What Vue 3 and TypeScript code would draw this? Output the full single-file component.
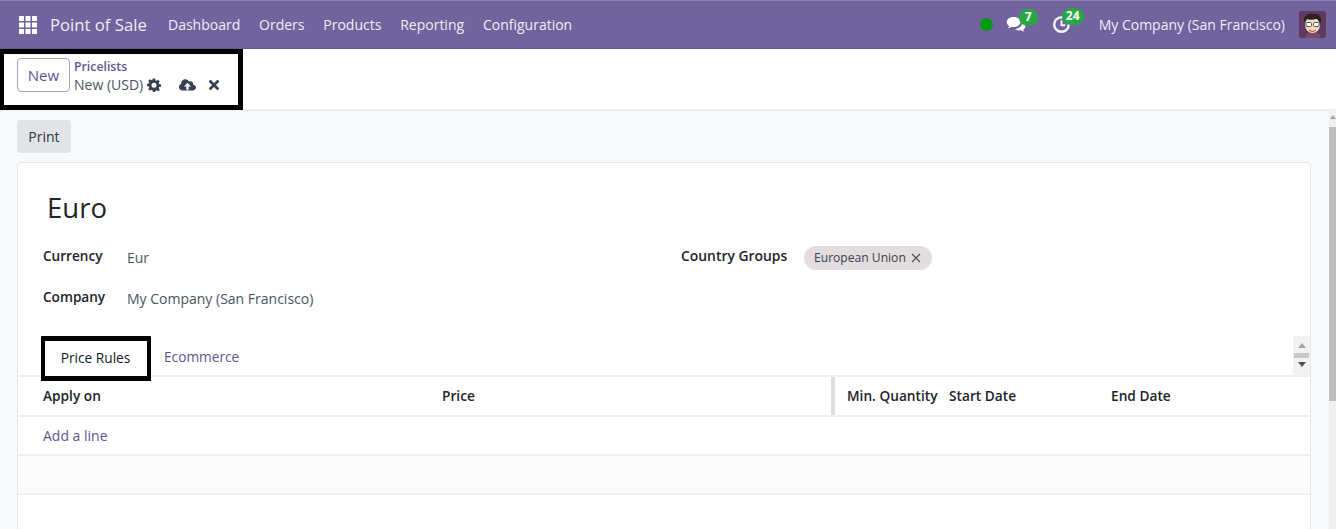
<script setup lang="ts">
const menus: string[] = ['Dashboard', 'Orders', 'Products', 'Reporting', 'Configuration']
const cols = [
  { label: 'Price', cls: 'c-price' },
  { label: 'Min. Quantity', cls: 'c-qty' },
  { label: 'Start Date', cls: 'c-start' },
  { label: 'End Date', cls: 'c-end' },
]
</script>

<template>
  <div class="page">
    <header class="nav">
      <svg class="apps" viewBox="0 0 18 18" width="18" height="18">
        <g fill="#fff">
          <rect x="0" y="0" width="5" height="5" /><rect x="6.5" y="0" width="5" height="5" /><rect x="13" y="0" width="5" height="5" />
          <rect x="0" y="6.5" width="5" height="5" /><rect x="6.5" y="6.5" width="5" height="5" /><rect x="13" y="6.5" width="5" height="5" />
          <rect x="0" y="13" width="5" height="5" /><rect x="6.5" y="13" width="5" height="5" /><rect x="13" y="13" width="5" height="5" />
        </g>
      </svg>
      <span class="brand">Point of Sale</span>
      <nav class="menu">
        <span v-for="m in menus" :key="m">{{ m }}</span>
      </nav>
      <div class="systray">
        <span class="dot"></span>
        <span class="tray-icon chat">
          <svg viewBox="0 0 22 18" width="21" height="17">
            <path fill="#fff" d="M8 1C3.9 1 .7 3.4.7 6.4c0 1.7 1 3.2 2.600 4.200-.2.9-.8 1.700-1.500 2.400 1.500-.2 2.900-.8 4-1.600.7.1 1.400.2 2.200.2 4.100 0 7.300-2.300 7.300-5.200S12.100 1 8 1z" />
            <path fill="#fff" d="M17 7.500c0 3.400-3.300 6-7.500 6.200 1.100 1 2.800 1.600 4.700 1.600.5 0 1-.1 1.500-.1.900.7 2.200 1.200 3.500 1.400-.6-.6-1-1.300-1.200-2 1.400-.8 2.300-2.100 2.300-3.500 0-1.500-1.100-2.900-2.800-3.600z" />
          </svg>
          <b class="badge b7">7</b>
        </span>
        <span class="tray-icon clock">
          <svg viewBox="0 0 20 20" width="19" height="19">
            <circle cx="10" cy="10" r="7.700" fill="none" stroke="#f3f0f8" stroke-width="2.600" />
            <path d="M10 5.500V10.800H14" fill="none" stroke="#f3f0f8" stroke-width="2" />
          </svg>
          <b class="badge b24">24</b>
        </span>
        <span class="company">My Company (San Francisco)</span>
        <svg class="avatar" viewBox="0 0 27 27" width="27" height="27">
          <rect width="27" height="27" rx="3" fill="#5d3b5e" />
          <path d="M6 27c.5-4 3-6 7.500-6s7.500 2 8 6z" fill="#7b4a68" />
          <ellipse cx="13.500" cy="14" rx="7.500" ry="8" fill="#f6d9bf" />
          <path d="M5 11C4 5 9 2 14 3c2-1 7 0 7 3 2 2 1 5 0 7-1-3-2-5-4-5-3 1-7 1-9 0-1 1-2 3-3 3z" fill="#2b2126" />
          <rect x="7" y="11.500" width="5.500" height="4" rx="1" fill="#fff" stroke="#444" stroke-width=".9" />
          <rect x="14.500" y="11.500" width="5.500" height="4" rx="1" fill="#fff" stroke="#444" stroke-width=".9" />
          <path d="M10 19c2 1.500 5 1.500 7 0" fill="none" stroke="#a5615a" stroke-width="1.100" />
        </svg>
      </div>
    </header>

    <section class="control">
      <div class="highlight">
        <button class="btn-new">New</button>
        <div class="crumbs">
          <a class="crumb-link">Pricelists</a>
          <div class="crumb-row">
            <span class="crumb-cur">New (USD)</span>
            <svg class="gear" viewBox="0 0 24 24" width="14" height="14">
              <path fill="#374151" fill-rule="evenodd" d="M10 1h4l.6 3.200 1.700.7L19 3.100 21.900 6l-1.800 2.700.7 1.700L24 11v4l-3.200.6-.7 1.700 1.800 2.700-2.900 2.900-2.700-1.800-1.700.7L14 24h-4l-.6-3.200-1.700-.7L5 21.900 2.100 19l1.800-2.700-.7-1.700L0 14v-4l3.200-.6.7-1.700L2.100 5 5 2.100l2.700 1.800 1.700-.7zM12 8.200a4.300 4.300 0 1 0 0 8.600 4.300 4.300 0 0 0 0-8.600z" />
            </svg>
            <svg class="cloud" viewBox="0 0 24 18" width="17" height="13">
              <path fill="#374151" fill-rule="evenodd" d="M19.800 7.800C19.900 7.400 20 7 20 6.500 20 4.600 18.400 3 16.500 3c-.7 0-1.400.2-2 .6C13.400 1.500 11.300 0 9 0 5.700 0 3 2.700 3 6v.5C1.200 7.200 0 9 0 11c0 2.800 2.200 5 5 5h14c2.800 0 5-2.200 5-4.500 0-1.700-1.800-3.300-4.200-3.700zM12 5l5 5.500h-3.300V15h-3.400v-4.500H7z" />
            </svg>
            <svg class="close" viewBox="0 0 12 12" width="10" height="10">
              <path d="M1.800 1.800l8.400 8.400M10.200 1.800l-8.400 8.400" stroke="#374151" stroke-width="3.200" stroke-linecap="square" />
            </svg>
          </div>
        </div>
      </div>
    </section>

    <main class="content">
      <button class="btn-print">Print</button>
      <div class="sheet">
        <h1 class="title">Euro</h1>
        <div class="fields">
          <div class="col-left">
            <div class="field f1"><label>Currency</label><span>Eur</span></div>
            <div class="field f2"><label>Company</label><span>My Company (San Francisco)</span></div>
          </div>
          <div class="col-right">
            <label>Country Groups</label>
            <span class="tag">European Union
              <svg viewBox="0 0 10 10" width="10" height="10"><path d="M1 1l8 8M9 1l-8 8" stroke="#4b5563" stroke-width="1.300" /></svg>
            </span>
          </div>
        </div>
        <div class="tabs">
          <span class="tab active">Price Rules</span>
          <span class="tab">Ecommerce</span>
          <div class="spin">
            <i class="up"></i><i class="bar"></i><i class="down"></i>
          </div>
        </div>
        <div class="thead">
          <span class="c-apply">Apply on</span>
          <span v-for="c in cols" :key="c.label" :class="c.cls">{{ c.label }}</span>
        </div>
        <div class="row add">Add a line</div>
        <div class="row shade"></div>
      </div>
    </main>

    <aside class="scrollbar">
      <i class="arrow"></i>
      <div class="thumb"></div>
    </aside>
  </div>
</template>

<style scoped>
.page {
  position: relative;
  height: 529px;
  overflow: hidden;
  font-family: "Open Sans", "Noto Sans", sans-serif;
  font-size: 14px;
  color: #374151;
  background: #fff;
}
.nav {
  height: 49px;
  box-sizing: border-box;
  display: flex;
  align-items: center;
  background: #71639e;
  border-top: 1px solid #8d80b3;
  border-bottom: 1px solid #65598f;
  padding: 0 10px 0 19px;
  color: #f0edf5;
}
.brand { margin-left: 13px; font-size: 16.7px; width: 118px; white-space: nowrap; }
.menu { display: flex; gap: 18.8px; font-size: 14px; }
.systray { margin-left: auto; display: flex; align-items: center; }
.dot { width: 13px; height: 13px; border-radius: 50%; background: #019a15; }
.tray-icon { position: relative; display: flex; }
.chat { margin-left: 13px; }
.clock { margin-left: 25px; }
.badge {
  position: absolute;
  top: -7px;
  height: 17px;
  border-radius: 9px;
  background: #28a745;
  color: #fff;
  font-size: 12px;
  line-height: 16px;
  font-weight: 700;
  text-align: center;
}
.b7 { left: 13px; width: 19px; }
.b24 { left: 10px; width: 22px; }
.company { margin-left: 28px; white-space: nowrap; }
.avatar { margin-left: 14px; }

.control {
  height: 62px;
  box-sizing: border-box;
  border-bottom: 2px solid #eceef1;
  background: #fff;
}
.highlight {
  width: 243px;
  height: 61px;
  box-sizing: border-box;
  border: 5px solid #000;
  border-left-width: 4px;
  display: flex;
  align-items: flex-start;
  padding: 4px 0 0 13px;
  background: #fff;
}
.btn-new {
  width: 53px;
  height: 34px;
  box-sizing: border-box;
  border: 1px solid #a79fc4;
  border-radius: 4px;
  background: #fff;
  color: #5f5590;
  font: 500 15px "Open Sans", sans-serif;
  padding: 0;
}
.crumbs { margin-left: 4px; display: flex; flex-direction: column; }
.crumb-link { font-size: 12.300px; font-weight: 600; color: #5f5590; line-height: 17px; }
.crumb-row { display: flex; align-items: center; line-height: 20px; height: 20px; white-space: nowrap; color: #4b5563; }
.gear { margin-left: 4px; }
.cloud { margin-left: 18px; }
.close { margin-left: 13px; }

.content {
  background: #f8f9fa;
  height: 418px;
  box-sizing: border-box;
  padding: 9px 25px 0 17px;
}
.btn-print {
  display: block;
  width: 54px;
  height: 33px;
  border: 0;
  border-radius: 3px;
  background: #e2e4e8;
  color: #2f3640;
  font: 500 14px "Open Sans", sans-serif;
  padding: 0;
}
.sheet {
  margin-top: 9px;
  width: 1294px;
  height: 380px;
  box-sizing: border-box;
  background: #fff;
  border: 1px solid #e6e7ea;
  border-radius: 4px;
}
.title { margin: 24px 0 0 29px; font-size: 27.500px; font-weight: 400; line-height: 41px; color: #212529; }
.fields { display: flex; margin-top: 18px; padding-left: 25px; height: 89px; }
.col-left { width: 638px; }
.field { display: flex; align-items: center; height: 20px; }
.f2 { margin-top: 21px; }
.field label, .col-right label { font-weight: 600; color: #212529; font-size: 13.600px; }
.field label { width: 84px; margin-top: -2px; }
.field span { color: #4b5563; font-size: 14px; margin-top: 2px; }
.col-right { display: flex; align-items: center; height: 24px; margin-top: -1px; }
.col-right label { width: 123px; margin-top: -3px; font-size: 13.900px; }
.tag {
  display: inline-flex;
  align-items: center;
  gap: 5px;
  height: 24px;
  box-sizing: border-box;
  padding: 0 11px 0 10px;
  background: #e3dedd;
  border-radius: 12px;
  color: #374151;
  font-size: 12.100px;
  font-weight: 500;
  margin-top: 1px;
}
.tabs {
  position: relative;
  height: 40px;
  display: flex;
  padding-left: 23px;
  border-bottom: 2px solid #eff0f2;
  box-sizing: content-box;
}
.tab { display: flex; align-items: center; color: #5f5590; padding: 3px 0 0 13px; height: 40px; box-sizing: border-box; font-size: 13.700px; }
.tab.active {
  box-sizing: border-box;
  width: 110px;
  height: 45px;
  justify-content: center;
  padding: 0 1px 3px 0;
  border: 4px solid #000;
  border-top-width: 5px;
  border-bottom-width: 5px;
  color: #111827;
  background: #fff;
  position: relative;
  margin-top: 1px;
}
.spin {
  position: absolute;
  right: 0;
  top: 1px;
  width: 17px;
  height: 39px;
  background: #f2f2f2;
  display: flex;
  flex-direction: column;
  align-items: center;
  padding-top: 7px;
  box-sizing: border-box;
}
.spin .up { border: 4px solid transparent; border-top: 0; border-bottom: 5px solid #a3a3a3; }
.spin .bar { width: 15px; height: 5px; background: #c8c8c8; margin: 5px 0 4px; }
.spin .down { border: 4px solid transparent; border-bottom: 0; border-top: 5px solid #505050; }

.thead {
  position: relative;
  height: 38px;
  border-bottom: 2px solid #eff0f2;
  font-weight: 600;
  font-size: 13.700px;
  line-height: 37px;
  color: #212529;
  display: flex;
  align-items: stretch;
  padding-left: 25px;
}
.c-apply { width: 399px; }
.c-price { width: 389px; border-right: 4px solid #dedede; }
.c-qty { margin-left: 12px; width: 102px; white-space: nowrap; }
.c-start { width: 162px; }
.c-end { width: 100px; }
.row { height: 37px; border-bottom: 2px solid #eff0f2; padding-left: 25px; display: flex; align-items: center; }
.add { color: #5f5590; }
.shade { background: #fbfbfb; }

.scrollbar {
  position: absolute;
  right: 0;
  top: 111px;
  bottom: 0;
  width: 7px;
  background: #f0f0f0;
  display: flex;
  flex-direction: column;
  align-items: center;
}
.arrow { margin-top: 4px; border: 3px solid transparent; border-top: 0; border-bottom: 4px solid #a3a3a3; }
.thumb { position: absolute; left: 0; right: 0; top: 16px; height: 274px; background: #bdbdbd; }
</style>
